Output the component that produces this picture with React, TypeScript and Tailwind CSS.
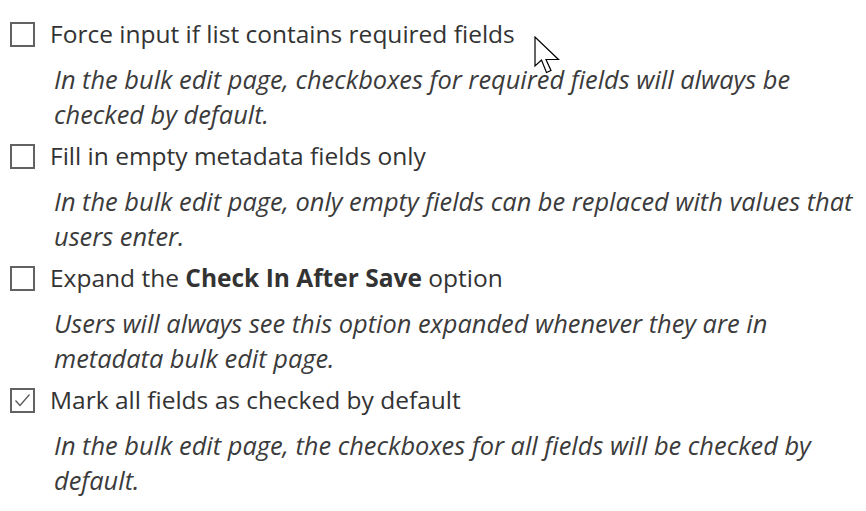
import { ReactNode } from 'react';

type OptionRowProps = {
  checked?: boolean;
  label: ReactNode;
  lines: string[];
};

const OptionRow = ({ checked, label, lines }: OptionRowProps) => {
  return (
    <div className="flex flex-col pb-[7px]">
      <div className="flex items-center gap-[15px] h-[35px]">
        <span className="flex items-center justify-center w-[25px] h-[25px] border-2 border-[#626262] shrink-0">
          {checked && (
            <svg width="19" height="19" viewBox="0 0 19 19" fill="none">
              <path d="M2.5 9.5 L7 14.5 L16.5 3.5" stroke="#555" strokeWidth="1.2" />
            </svg>
          )}
        </span>
        <span className="text-[24.5px] text-[#333] whitespace-nowrap">{label}</span>
      </div>
      <p className="mt-[10px] ml-[44px] italic text-[25.4px] leading-[35px] text-[#3b3b3b]">
        {lines.map((line, i) => (
          <span key={i} className="block whitespace-nowrap">
            {line}
          </span>
        ))}
      </p>
    </div>
  );
};

const Cursor = () => (
  <svg
    className="absolute left-[534px] top-[36px]"
    width="28"
    height="40"
    viewBox="0 0 28 40"
    fill="none"
  >
    <path
      d="M1 1 L1 30 L7.5 24 L12.5 36.5 L17 34.5 L12 23.5 L24.5 23.5 Z"
      fill="#fff"
      stroke="#000"
      strokeWidth="1.2"
      strokeLinejoin="miter"
    />
  </svg>
);

export default function App() {
  return (
    <div
      className="relative w-[866px] h-[511px] bg-white pl-[10px] pt-[17px] overflow-hidden"
      style={{ fontFamily: '"Open Sans", "Noto Sans", sans-serif' }}
    >
      <OptionRow
        label="Force input if list contains required fields"
        lines={[
          'In the bulk edit page, checkboxes for required fields will always be',
          'checked by default.',
        ]}
      />
      <OptionRow
        label="Fill in empty metadata fields only"
        lines={[
          'In the bulk edit page, only empty fields can be replaced with values that',
          'users enter.',
        ]}
      />
      <OptionRow
        label={
          <>
            Expand the <span className="font-bold">Check In After Save</span> option
          </>
        }
        lines={[
          'Users will always see this option expanded whenever they are in',
          'metadata bulk edit page.',
        ]}
      />
      <OptionRow
        checked
        label="Mark all fields as checked by default"
        lines={[
          'In the bulk edit page, the checkboxes for all fields will be checked by',
          'default.',
        ]}
      />
      <Cursor />
    </div>
  );
}
